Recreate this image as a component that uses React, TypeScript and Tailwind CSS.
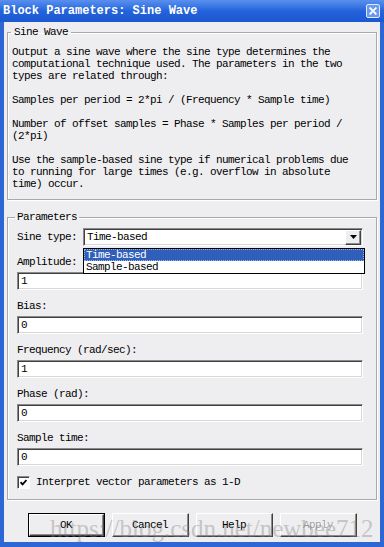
const mono = "font-['Liberation_Mono',monospace] text-[11px] tracking-[-0.6px]"

const desc = [
  'Output a sine wave where the sine type determines the',
  'computational technique used. The parameters in the two',
  'types are related through:',
  '',
  'Samples per period = 2*pi / (Frequency * Sample time)',
  '',
  'Number of offset samples = Phase * Samples per period /',
  '(2*pi)',
  '',
  'Use the sample-based sine type if numerical problems due',
  'to running for large times (e.g. overflow in absolute',
  'time) occur.',
]

function Field({ value }: { value: string }) {
  return (
    <div className="flex h-[18px] items-center border border-[#8a8a8a] border-b-white border-r-white bg-white pl-[3px] shadow-[inset_1px_1px_0_#404040,inset_-1px_-1px_0_#d8d8d8]">
      <span className="leading-none text-black">{value}</span>
    </div>
  )
}

function Btn({ label, isDefault, disabled }: { label: string; isDefault?: boolean; disabled?: boolean }) {
  return (
    <div className={`h-[24px] w-[77px] ${isDefault ? 'border border-black' : ''}`}>
      <div
        className={`flex h-full w-full items-center justify-center border border-t-white border-l-white border-b-[#404040] border-r-[#404040] bg-[#eeedef] shadow-[inset_-1px_-1px_0_#8c8c8c] ${
          disabled ? 'text-[#a2a2a2] [text-shadow:1px_1px_0_#fff]' : 'text-black'
        }`}
      >
        {label}
      </div>
    </div>
  )
}

export default function App() {
  return (
    <div className={`relative flex h-[547px] w-[384px] flex-col overflow-hidden ${mono}`}>
      {/* title bar */}
      <div className="flex h-[22px] shrink-0 items-center justify-between bg-gradient-to-b from-[#5a90ee] via-[#2363dc] to-[#1b57d0] pl-[3px] pr-[4px]">
        <span className="text-[12px] font-bold tracking-[0px] text-white">Block Parameters: Sine Wave</span>
        <div className="grid h-[14px] w-[14px] place-items-center rounded-[2px] border border-[#dfe9fb] bg-[#6a9af0]">
          <svg viewBox="0 0 10 10" className="h-[8px] w-[8px]" stroke="white" strokeWidth="2.2" strokeLinecap="square">
            <line x1="1.5" y1="1.5" x2="8.5" y2="8.5" />
            <line x1="8.5" y1="1.5" x2="1.5" y2="8.5" />
          </svg>
        </div>
      </div>

      {/* window body */}
      <div className="flex flex-1 flex-col border-x-4 border-b-[5px] border-[#2f66d6] bg-[#eeedef] px-[3px] pt-[4px] pb-[5px] text-black">
        <fieldset className="h-[174px] border border-[#a9a8ad] px-[4px] pt-[8px] shadow-[inset_1px_1px_0_#fff,1px_1px_0_#fff]">
          <legend className="ml-[-1px] px-[3px] leading-[12px]">Sine Wave</legend>
          <div className="whitespace-pre leading-[12px]">
            {desc.map((l, i) => (
              <div key={i} className="h-[12px]">
                {l}
              </div>
            ))}
          </div>
        </fieldset>

        <fieldset className="mt-[10px] h-[290px] border border-[#a9a8ad] pl-[9px] pr-[13px] pt-[4px] shadow-[inset_1px_1px_0_#fff,1px_1px_0_#fff]">
          <legend className="ml-[-2px] px-[2px] leading-[14px]">Parameters</legend>

          <div className="flex h-[18px] items-center">
            <span className="w-[66px] shrink-0">Sine type:</span>
            <div className="relative flex-1">
              <div className="flex h-[18px] items-center justify-between border border-[#8a8a8a] border-b-white border-r-white bg-white pl-[3px] shadow-[inset_1px_1px_0_#404040,inset_-1px_-1px_0_#d8d8d8]">
                <span className="leading-none">Time-based</span>
                <div className="mr-[1px] grid h-[15px] w-[16px] place-items-center border border-t-white border-l-white border-b-[#404040] border-r-[#404040] bg-[#eeedef] shadow-[inset_-1px_-1px_0_#8c8c8c]">
                  <svg viewBox="0 0 7 4" className="h-[4px] w-[7px]">
                    <polygon points="0,0 7,0 3.5,4" fill="black" />
                  </svg>
                </div>
              </div>
              {/* open dropdown list */}
              <div className="absolute left-0 -right-[2px] top-[20px] z-10 border border-black bg-white">
                <div className="flex h-[12px] items-center bg-[#2f5fba] pl-[2px] leading-none text-white outline-1 outline-dotted outline-offset-[-1px] outline-[#9db3e0]">
                  Time-based
                </div>
                <div className="flex h-[12px] items-center pl-[2px] leading-none">Sample-based</div>
              </div>
            </div>
          </div>

          <div className="mt-[9px] h-[14px] leading-[14px]">Amplitude:</div>
          <div className="mt-[3px]">
            <Field value="1" />
          </div>
          <div className="mt-[9px] h-[14px] leading-[14px]">Bias:</div>
          <div className="mt-[3px]">
            <Field value="0" />
          </div>
          <div className="mt-[9px] h-[14px] leading-[14px]">Frequency (rad/sec):</div>
          <div className="mt-[3px]">
            <Field value="1" />
          </div>
          <div className="mt-[9px] h-[14px] leading-[14px]">Phase (rad):</div>
          <div className="mt-[3px]">
            <Field value="0" />
          </div>
          <div className="mt-[9px] h-[14px] leading-[14px]">Sample time:</div>
          <div className="mt-[3px]">
            <Field value="0" />
          </div>

          <div className="mt-[10px] flex h-[13px] items-center gap-[6px]">
            <div className="grid h-[13px] w-[13px] place-items-center border border-[#8a8a8a] border-b-white border-r-white bg-white shadow-[inset_1px_1px_0_#404040]">
              <svg viewBox="0 0 7 7" className="h-[7px] w-[7px]" fill="none" stroke="black" strokeWidth="1.8">
                <polyline points="0.5,3.2 2.6,5.4 6.5,1" />
              </svg>
            </div>
            <span>Interpret vector parameters as 1-D</span>
          </div>
        </fieldset>

        <div className="mt-[13px] flex justify-center gap-[7px]">
          <Btn label="OK" isDefault />
          <Btn label="Cancel" />
          <Btn label="Help" />
          <Btn label="Apply" disabled />
        </div>
      </div>

      {/* watermark */}
      <div className="pointer-events-none absolute left-[50px] top-[510px] font-['Liberation_Serif',serif] text-[25px] tracking-[0px] text-[rgba(130,130,130,0.4)]">
        https://blog.csdn.net/newbee712
      </div>
    </div>
  )
}
